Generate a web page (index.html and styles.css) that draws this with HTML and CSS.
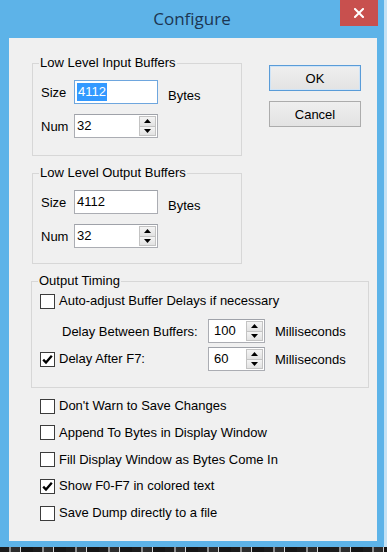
FILE: index.html
```html
<!DOCTYPE html>
<html>
<head>
<meta charset="utf-8">
<title>Configure</title>
<link rel="stylesheet" href="styles.css">
</head>
<body>
<div class="screen">
  <div class="window">
    <div class="titlebar">
      <h1 class="title">Configure</h1>
      <button class="close" aria-label="Close">
        <svg width="10" height="10" viewBox="0 0 10 10"><path d="M1 1 L9 9 M9 1 L1 9" stroke="#fff" stroke-width="2" stroke-linecap="square"/></svg>
      </button>
    </div>
    <div class="client">
      <div class="top">
        <div class="groups">
          <fieldset class="group g1">
            <legend>Low Level Input Buffers</legend>
            <div class="field-row">
              <span class="lbl">Size</span>
              <div class="textbox focused"><span class="val"><span class="sel">4112</span></span></div>
              <span class="unit">Bytes</span>
            </div>
            <div class="field-row">
              <span class="lbl">Num</span>
              <div class="textbox spin"><span class="val">32</span><span class="spinbtns"><span class="sb"><svg width="7" height="4" viewBox="0 0 7 4"><path d="M3.5 0 L7 4 L0 4 Z" fill="#000"/></svg></span><span class="sb"><svg width="7" height="4" viewBox="0 0 7 4"><path d="M0 0 L7 0 L3.5 4 Z" fill="#000"/></svg></span></span></div>
            </div>
          </fieldset>
          <fieldset class="group g2">
            <legend>Low Level Output Buffers</legend>
            <div class="field-row">
              <span class="lbl">Size</span>
              <div class="textbox"><span class="val">4112</span></div>
              <span class="unit">Bytes</span>
            </div>
            <div class="field-row">
              <span class="lbl">Num</span>
              <div class="textbox spin"><span class="val">32</span><span class="spinbtns"><span class="sb"><svg width="7" height="4" viewBox="0 0 7 4"><path d="M3.5 0 L7 4 L0 4 Z" fill="#000"/></svg></span><span class="sb"><svg width="7" height="4" viewBox="0 0 7 4"><path d="M0 0 L7 0 L3.5 4 Z" fill="#000"/></svg></span></span></div>
            </div>
          </fieldset>
        </div>
        <div class="buttons">
          <button class="btn default">OK</button>
          <button class="btn">Cancel</button>
        </div>
      </div>

      <fieldset class="group timing">
        <legend>Output Timing</legend>
        <div class="check-row">
          <span class="cb"></span><span>Auto-adjust Buffer Delays if necessary</span>
        </div>
        <div class="timing-grid">
          <span class="tlabel indent">Delay Between Buffers:</span>
          <div class="textbox spin small"><span class="val">100</span><span class="spinbtns"><span class="sb"><svg width="7" height="4" viewBox="0 0 7 4"><path d="M3.5 0 L7 4 L0 4 Z" fill="#000"/></svg></span><span class="sb"><svg width="7" height="4" viewBox="0 0 7 4"><path d="M0 0 L7 0 L3.5 4 Z" fill="#000"/></svg></span></span></div>
          <span>Milliseconds</span>
          <div class="check-row">
            <span class="cb"><svg width="13" height="13" viewBox="0 0 13 13"><path d="M2.2 6.6 L5 9.6 L10.8 2.8" fill="none" stroke="#000" stroke-width="2.3"/></svg></span><span>Delay After F7:</span>
          </div>
          <div class="textbox spin small"><span class="val">60</span><span class="spinbtns"><span class="sb"><svg width="7" height="4" viewBox="0 0 7 4"><path d="M3.5 0 L7 4 L0 4 Z" fill="#000"/></svg></span><span class="sb"><svg width="7" height="4" viewBox="0 0 7 4"><path d="M0 0 L7 0 L3.5 4 Z" fill="#000"/></svg></span></span></div>
          <span>Milliseconds</span>
        </div>
      </fieldset>

      <div class="options">
        <div class="check-row"><span class="cb"></span><span>Don't Warn to Save Changes</span></div>
        <div class="check-row"><span class="cb"></span><span>Append To Bytes in Display Window</span></div>
        <div class="check-row"><span class="cb"></span><span>Fill Display Window as Bytes Come In</span></div>
        <div class="check-row"><span class="cb"><svg width="13" height="13" viewBox="0 0 13 13"><path d="M2.2 6.6 L5 9.6 L10.8 2.8" fill="none" stroke="#000" stroke-width="2.3"/></svg></span><span>Show F0-F7 in colored text</span></div>
        <div class="check-row"><span class="cb"></span><span>Save Dump directly to a file</span></div>
      </div>
    </div>
  </div>
  <div class="taskbar"></div>
</div>
</body>
</html>
```
FILE: styles.css
```css
body {
  margin: 0;
  background: #c4e2f5;
  font-family: "Liberation Sans", Arial, sans-serif;
  font-size: 13px;
  color: #000;
}

.screen {
  width: 387px;
  height: 552px;
  display: flex;
  flex-direction: column;
}

.window {
  width: 384px;
  height: 547px;
  background: #5db3e8;
  display: flex;
  flex-direction: column;
}

.titlebar {
  height: 38px;
  flex: none;
  display: grid;
  grid-template-columns: 1fr auto 1fr;
}

.title {
  grid-column: 2;
  margin: 0;
  font-family: "Open Sans", "Noto Sans", sans-serif;
  font-weight: 400;
  font-size: 17px;
  line-height: 38px;
  color: #1c3653;
}

.close {
  grid-column: 3;
  justify-self: end;
  align-self: start;
  width: 38px;
  height: 26px;
  margin: 0 6px 0 0;
  padding: 0;
  border: 0;
  background: #c8504e;
  display: flex;
  align-items: center;
  justify-content: center;
}

.client {
  flex: 1;
  margin: 0 7px 6px 9px;
  background: #f0f0f0;
  padding: 17px 0 0 22px;
  box-sizing: border-box;
}

.top {
  display: flex;
  align-items: flex-start;
}

.groups {
  display: flex;
  flex-direction: column;
  gap: 9px;
  width: 210px;
  margin-left: 1px;
}

.group {
  margin: 0;
  border: 1px solid #d7d7d7;
  padding: 9px 0 0 8px;
  min-inline-size: 0;
}

.group legend {
  padding: 0 1px;
  margin-left: -2px;
  line-height: 16px;
  font-size: 13px;
}

.g1 { padding-bottom: 17px; }
.g2 { padding-bottom: 15px; }

.field-row {
  display: flex;
  align-items: center;
  height: 24px;
}

.field-row + .field-row { margin-top: 10px; }

.lbl { width: 33px; }

.textbox {
  width: 84px;
  height: 24px;
  box-sizing: border-box;
  border: 1px solid #abadb3;
  border-top-color: #9fa2a9;
  background: #fff;
  display: flex;
  align-items: stretch;
}

.textbox.focused { border-color: #6ea6de; }

.textbox .val {
  flex: 1;
  display: flex;
  align-items: center;
  padding-left: 2px;
  line-height: 16px;
}

.sel {
  background: #3399ff;
  color: #fff;
  padding: 1px 1px;
  line-height: 16px;
}

.spinbtns {
  width: 17px;
  display: flex;
  flex-direction: column;
  padding: 1px 1px 1px 0;
}

.sb {
  flex: 1;
  display: flex;
  align-items: center;
  justify-content: center;
  background: linear-gradient(#f4f4f4, #e2e2e2);
  border: 1px solid #c3c3c3;
}

.sb + .sb { border-top: 0; }

.unit {
  margin-left: 10px;
  align-self: flex-start;
  margin-top: 8px;
  line-height: 16px;
}

.buttons {
  display: flex;
  flex-direction: column;
  gap: 10px;
  margin: 10px 0 0 27px;
}

.btn {
  width: 92px;
  height: 26px;
  padding: 0;
  font-family: "Liberation Sans", Arial, sans-serif;
  font-size: 13px;
  color: #000;
  background: linear-gradient(#efefef, #e3e3e3);
  border: 1px solid #acacac;
}

.btn.default {
  border-color: #5a9cd8;
  box-shadow: inset 0 0 0 1px #cfe4f7;
}

.timing {
  width: 338px;
  box-sizing: border-box;
  margin-top: 9px;
  padding: 4px 0 16px 8px;
}

.check-row {
  display: flex;
  align-items: center;
  gap: 4px;
  height: 16px;
  line-height: 16px;
}

.cb {
  width: 15px;
  height: 15px;
  box-sizing: border-box;
  border: 1px solid #3c3c3c;
  background: #fff;
  display: flex;
  align-items: center;
  justify-content: center;
  flex: none;
}

.timing-grid {
  display: grid;
  grid-template-columns: 158px 57px auto;
  column-gap: 10px;
  row-gap: 4px;
  align-items: center;
  margin-top: 10px;
}

.indent { padding-left: 22px; }

.textbox.small { width: 57px; }
.textbox.small .val { padding-left: 5px; }

.options {
  margin-top: 10px;
  padding-left: 9px;
  display: flex;
  flex-direction: column;
  gap: 10.75px;
}

.taskbar {
  height: 5px;
  background: repeating-linear-gradient(90deg, #1b1b1b 0 9px, #8a8a8a 9px 11px, #2c2c2c 11px 20px, #d0d0d0 20px 21px, #151515 21px 33px);
}
```
